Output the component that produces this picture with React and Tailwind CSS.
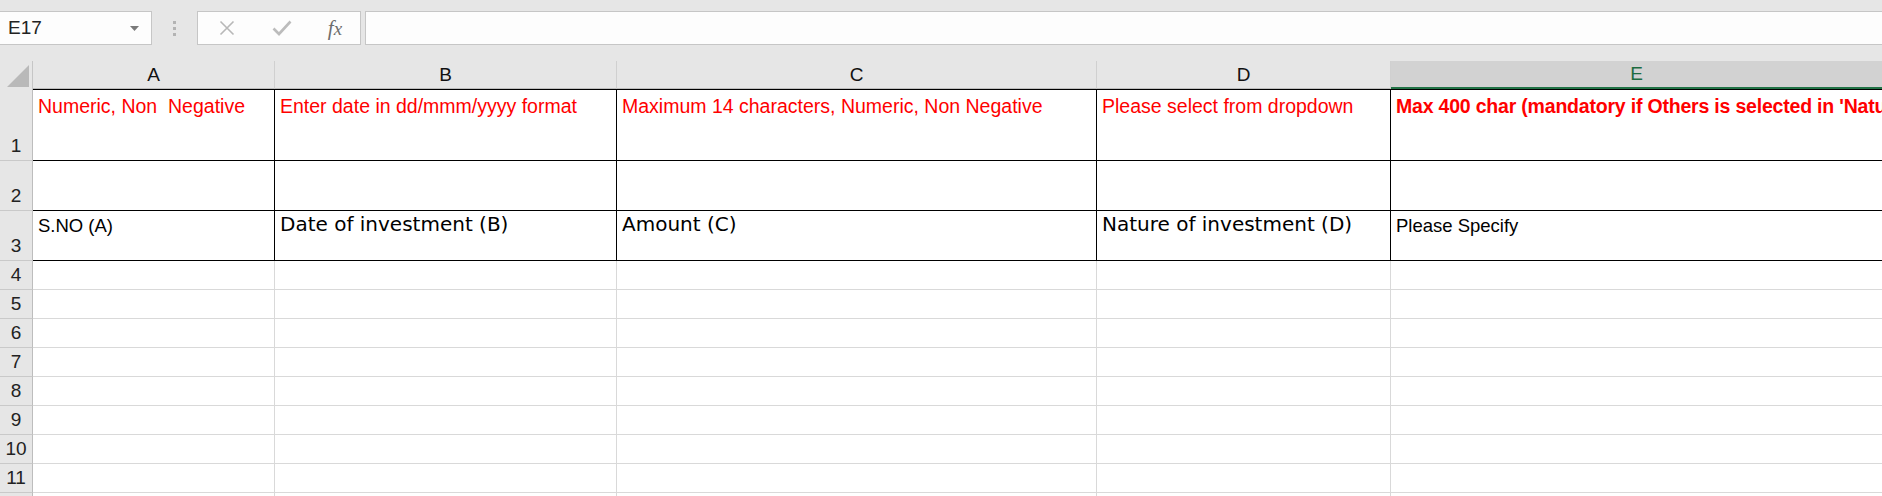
import React from 'react';

const SANS = "font-['Liberation_Sans',Arial,sans-serif]";
const VERD = "font-['DejaVu_Sans',Verdana,sans-serif]";

const COLS = [
  { key: 'A', w: 'w-[242px]' },
  { key: 'B', w: 'w-[342px]' },
  { key: 'C', w: 'w-[480px]' },
  { key: 'D', w: 'w-[294px]' },
  { key: 'E', w: 'flex-1' },
];

const ROWS = [
  {
    n: 1,
    h: 'h-[72px]',
    cells: [
      { t: 'Numeric, Non  Negative', c: `text-[#ff0000] text-[19.5px] ${SANS} pt-[4px]` },
      { t: 'Enter date in dd/mmm/yyyy format', c: `text-[#ff0000] text-[19.5px] ${SANS} pt-[4px]` },
      { t: 'Maximum 14 characters, Numeric, Non Negative', c: `text-[#ff0000] text-[19.5px] ${SANS} pt-[4px]` },
      { t: 'Please select from dropdown', c: `text-[#ff0000] text-[19.5px] ${SANS} pt-[4px]` },
      { t: "Max 400 char (mandatory if Others is selected in 'Nature of investment (D)')", c: `text-[#ff0000] text-[19.5px] font-bold tracking-[-0.2px] ${SANS} pt-[4px]` },
    ],
  },
  { n: 2, h: 'h-[50px]', cells: [{}, {}, {}, {}, {}] },
  {
    n: 3,
    h: 'h-[50px]',
    cells: [
      { t: 'S.NO (A)', c: `text-black text-[18.5px] ${SANS} pt-[3px]` },
      { t: 'Date of investment (B)', c: `text-black text-[20px] ${VERD} pt-[1px]` },
      { t: 'Amount (C)', c: `text-black text-[20px] ${VERD} pt-[1px]` },
      { t: 'Nature of investment (D)', c: `text-black text-[20px] ${VERD} pt-[1px]` },
      { t: 'Please Specify', c: `text-black text-[18.5px] ${SANS} pt-[3px]` },
    ],
  },
];

const EMPTY_ROWS = [4, 5, 6, 7, 8, 9, 10, 11];

function RowHeader({ n, h }) {
  return (
    <div
      className={`${h} w-[33px] shrink-0 bg-[#e6e6e6] border-r border-[#bdbdbd] border-b border-b-[#c9c9c9] flex items-end justify-center pb-[5px] text-[19px] leading-none text-[#222] ${SANS}`}
    >
      {n}
    </div>
  );
}

function FormulaBar() {
  return (
    <div className="h-[61px] bg-[#e6e6e6] flex items-start pt-[11px]">
      <div className={`w-[152px] h-[34px] bg-[#fdfdfd] border border-l-0 border-[#c6c6c6] flex items-center justify-between pl-[8px] pr-[12px] text-[19px] text-[#222] ${SANS}`}>
        <span>E17</span>
        <svg width="9" height="5" viewBox="0 0 9 5">
          <path d="M0 0 L9 0 L4.5 5 Z" fill="#7a7a7a" />
        </svg>
      </div>
      <div className="w-[45px] h-[34px] flex flex-col items-center justify-center gap-[3px]">
        <div className="w-[3px] h-[3px] bg-[#b3b3b3]" />
        <div className="w-[3px] h-[3px] bg-[#b3b3b3]" />
        <div className="w-[3px] h-[3px] bg-[#b3b3b3]" />
      </div>
      <div className="w-[164px] h-[34px] bg-[#fdfdfd] border border-[#c6c6c6] flex items-center">
        <div className="w-[56px] flex justify-center pl-[2px]">
          <svg width="16" height="16" viewBox="0 0 16 16">
            <path d="M1.5 1.5 L14.5 14.5 M14.5 1.5 L1.5 14.5" stroke="#b8b8b8" strokeWidth="1.6" />
          </svg>
        </div>
        <div className="w-[56px] flex justify-center">
          <svg width="20" height="16" viewBox="0 0 20 16">
            <path d="M1.5 8.5 L7 14 L18.5 1.5" stroke="#bcbcbc" strokeWidth="2.6" fill="none" />
          </svg>
        </div>
        <div className="w-[50px] flex justify-center">
          <span className="font-['Liberation_Serif',serif] italic text-[21px] text-[#6e6e6e] leading-none">
            f<span className="text-[19px]">x</span>
          </span>
        </div>
      </div>
      <div className="w-[4px]" />
      <div className="flex-1 h-[34px] bg-[#fdfdfd] border border-r-0 border-[#c6c6c6]" />
    </div>
  );
}

function ColumnHeaders() {
  return (
    <div className="flex h-[28px]">
      <div className="w-[33px] shrink-0 bg-[#e6e6e6] border-r border-[#c6c6c6] flex items-end justify-end pr-[3px] pb-[2px]">
        <svg width="22" height="22" viewBox="0 0 22 22">
          <path d="M22 0 L22 22 L0 22 Z" fill="#b9b9b9" />
        </svg>
      </div>
      {COLS.map((col) =>
        col.key === 'E' ? (
          <div
            key={col.key}
            className={`${col.w} bg-[#d2d2d2] border-b-2 border-[#217346] flex items-center justify-center text-[19px] text-[#1d6b40] ${SANS} pt-[1px]`}
          >
            {col.key}
          </div>
        ) : (
          <div
            key={col.key}
            className={`${col.w} shrink-0 bg-[#e6e6e6] border-r border-[#d0d0d0] border-b border-b-[#bdbdbd] flex items-center justify-center text-[19px] text-[#111] ${SANS} pt-[2px]`}
          >
            {col.key}
          </div>
        )
      )}
    </div>
  );
}

export default function App() {
  return (
    <div className="w-[1882px] h-[496px] overflow-hidden bg-white">
      <FormulaBar />
      <ColumnHeaders />
      {ROWS.map((row) => (
        <div key={row.n} className="flex">
          <RowHeader n={row.n} h={row.h} />
          {COLS.map((col, i) => {
            const cell = row.cells[i];
            return (
              <div
                key={col.key}
                className={`${row.h} ${col.w} ${col.key === 'E' ? 'min-w-0' : 'shrink-0 border-r'} border-b border-black ${row.n === 1 ? 'border-t' : ''} pl-[5px] overflow-hidden whitespace-pre leading-[24px] ${cell.c || ''}`}
              >
                {cell.t}
              </div>
            );
          })}
        </div>
      ))}
      {EMPTY_ROWS.map((n) => (
        <div key={n} className="flex">
          <RowHeader n={n} h="h-[29px]" />
          {COLS.map((col) => (
            <div
              key={col.key}
              className={`h-[29px] ${col.w} ${col.key === 'E' ? 'min-w-0' : 'shrink-0 border-r'} border-b border-[#d9d9d9]`}
            />
          ))}
        </div>
      ))}
      <div className="flex h-[6px]">
        <div className="w-[33px] shrink-0 bg-[#e6e6e6] border-r border-[#bdbdbd]" />
        {COLS.map((col) => (
          <div key={col.key} className={`${col.w} ${col.key === 'E' ? 'min-w-0' : 'shrink-0 border-r'} border-[#d9d9d9]`} />
        ))}
      </div>
    </div>
  );
}
